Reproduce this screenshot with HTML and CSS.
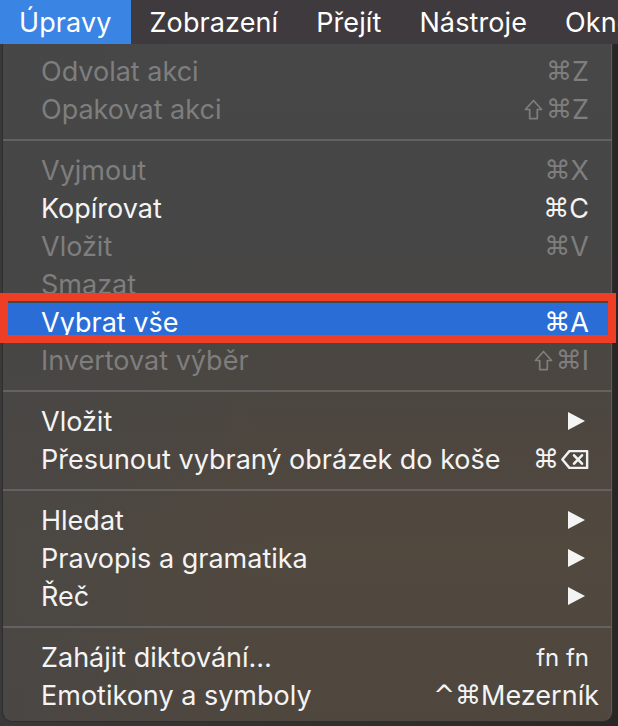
FILE: index.html
```html
<!DOCTYPE html>
<html lang="cs">
<head>
<meta charset="utf-8">
<title>Úpravy</title>
<link rel="stylesheet" href="styles.css">
</head>
<body>
<div class="screen">
  <div class="menubar">
    <span class="mb-item active">Úpravy</span>
    <span class="mb-item">Zobrazení</span>
    <span class="mb-item">Přejít</span>
    <span class="mb-item">Nástroje</span>
    <span class="mb-item">Okno</span>
  </div>
  <div class="panel">
    <div class="row disabled"><span class="label">Odvolat akci</span><span class="key"><span class="sym">⌘</span>Z</span></div>
    <div class="row disabled"><span class="label">Opakovat akci</span><span class="key"><svg class="shift" viewBox="0 0 20 22" width="19" height="21"><path d="M10 1.5 L18.5 11 H14 V20.5 H6 V11 H1.5 Z" fill="none" stroke="currentColor" stroke-width="1.8" stroke-linejoin="round"/></svg><span class="sym">⌘</span>Z</span></div>
    <div class="sep"></div>
    <div class="row disabled"><span class="label">Vyjmout</span><span class="key"><span class="sym">⌘</span>X</span></div>
    <div class="row"><span class="label">Kopírovat</span><span class="key"><span class="sym">⌘</span>C</span></div>
    <div class="row disabled"><span class="label">Vložit</span><span class="key"><span class="sym">⌘</span>V</span></div>
    <div class="row disabled"><span class="label">Smazat</span></div>
    <div class="row selected"><span class="label">Vybrat vše</span><span class="key"><span class="sym">⌘</span>A</span></div>
    <div class="row disabled"><span class="label">Invertovat výběr</span><span class="key"><svg class="shift" viewBox="0 0 20 22" width="19" height="21"><path d="M10 1.5 L18.5 11 H14 V20.5 H6 V11 H1.5 Z" fill="none" stroke="currentColor" stroke-width="1.8" stroke-linejoin="round"/></svg><span class="sym">⌘</span>I</span></div>
    <div class="sep"></div>
    <div class="row"><span class="label">Vložit</span><span class="arrow"></span></div>
    <div class="row"><span class="label">Přesunout vybraný obrázek do koše</span><span class="key"><span class="sym">⌘</span><svg class="del" viewBox="0 0 30 22" width="28" height="21"><path d="M9 2 H28 V20 H9 L1.5 11 Z" fill="none" stroke="#f2f2f2" stroke-width="2.6" stroke-linejoin="round"/><path d="M14 6.5 L22.5 15.5 M22.5 6.5 L14 15.5" stroke="#f2f2f2" stroke-width="2.8" stroke-linecap="round"/></svg></span></div>
    <div class="sep"></div>
    <div class="row"><span class="label">Hledat</span><span class="arrow"></span></div>
    <div class="row"><span class="label">Pravopis a gramatika</span><span class="arrow"></span></div>
    <div class="row"><span class="label">Řeč</span><span class="arrow"></span></div>
    <div class="sep"></div>
    <div class="row"><span class="label">Zahájit diktování…</span><span class="key small">fn fn</span></div>
    <div class="row"><span class="label">Emotikony a symboly</span><span class="key wide"><span class="sym">^⌘</span>Mezerník</span></div>
  </div>
  <div class="callout"></div>
</div>
</body>
</html>
```
FILE: styles.css
```css
* { box-sizing: border-box; }
html, body {
  margin: 0;
  padding: 0;
  background: #262426;
}
.screen {
  position: relative;
  width: 618px;
  height: 726px;
  overflow: hidden;
  font-family: "Inter", "Liberation Sans", "DejaVu Sans", sans-serif;
  color: #f2f2f2;
  background: linear-gradient(90deg, #3a3838 0%, #2a2626 100%);
}
.menubar {
  height: 44px;
  display: flex;
  align-items: stretch;
  background: #3f3a3d;
  font-size: 27px;
  white-space: nowrap;
}
.mb-item {
  display: flex;
  align-items: center;
  padding: 0 19px;
  color: #ffffff;
  letter-spacing: 0.1px;
}
.mb-item.active {
  background: #3a84e3;
}
.panel {
  margin-left: 2px;
  width: 611px;
  height: 678px;
  padding-top: 8px;
  border: 1px solid #2e2e2e;
  border-top: none;
  border-radius: 0 0 10px 10px;
  background:
    linear-gradient(90deg, rgba(70,70,72,0.55) 0%, rgba(70,70,72,0) 45%),
    linear-gradient(180deg, #474747 0%, #474646 30%, #4d4640 55%, #51493e 75%, #4f473e 100%);
  box-shadow: inset -1px 0 0 #5a5a5a;
  font-size: 27px;
}
.row {
  height: 38px;
  display: flex;
  align-items: center;
  justify-content: space-between;
  padding: 0 23px 0 38px;
  color: #f4f4f4;
  white-space: nowrap;
}
.row.disabled {
  color: #7e7e7e;
}
.row.selected {
  background: #2a6dd6;
  color: #ffffff;
}
.key {
  display: flex;
  align-items: center;
}
.sym {
  font-family: "DejaVu Sans", sans-serif;
  font-size: 26px;
  margin-right: 0;
}
.shift {
  margin-right: 3px;
}
.key.small {
  font-size: 24px;
}
.key.wide {
  margin-right: -10px;
}
.del {
  margin-left: 2px;
}
.arrow {
  width: 0;
  height: 0;
  margin-right: 4px;
  border-top: 9px solid transparent;
  border-bottom: 9px solid transparent;
  border-left: 17px solid #f4f4f4;
}
.sep {
  height: 23px;
  display: flex;
  align-items: center;
}
.sep::before {
  content: "";
  display: block;
  width: 100%;
  height: 2px;
  background: #626262;
}
.callout {
  position: absolute;
  left: 0;
  top: 293px;
  width: 616px;
  height: 50px;
  border: 8px solid #ee3e26;
}
```
